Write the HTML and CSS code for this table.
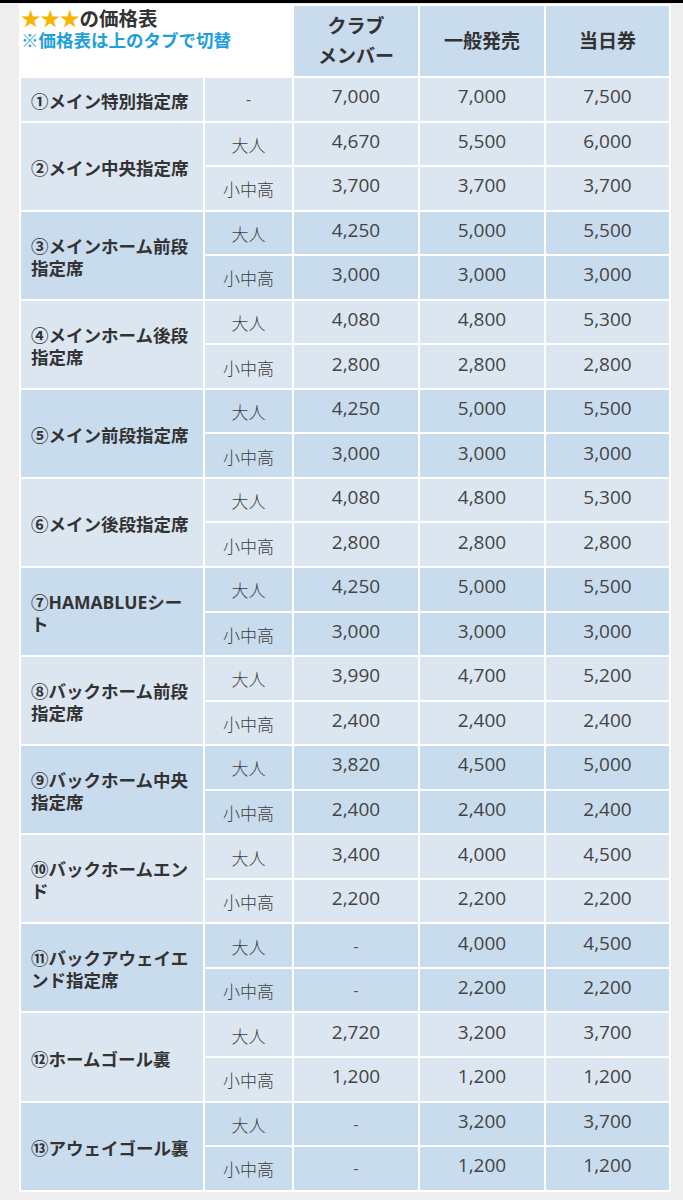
FILE: index.html
```html
<!DOCTYPE html>
<html lang="ja">
<head>
<meta charset="utf-8">
<link rel="stylesheet" href="styles.css">
</head>
<body>
<div class="topbar"></div>
<table class="price">
  <colgroup>
    <col class="c1"><col class="c2"><col class="c3"><col class="c4"><col class="c5">
  </colgroup>
  <thead>
    <tr class="head">
      <th colspan="2" class="title">
        <div class="t1"><span class="stars">★★★</span>の価格表</div>
        <div class="t2">※価格表は上のタブで切替</div>
      </th>
      <th>クラブ<br>メンバー</th>
      <th>一般発売</th>
      <th>当日券</th>
    </tr>
  </thead>
  <tbody>
    <tr class="lt"><th class="seat">①メイン特別指定席</th><td class="dash">-</td><td class="num">7,000</td><td class="num">7,000</td><td class="num">7,500</td></tr>

    <tr class="lt"><th class="seat" rowspan="2">②メイン中央指定席</th><td class="age">大人</td><td class="num">4,670</td><td class="num">5,500</td><td class="num">6,000</td></tr>
    <tr class="lt"><td class="age">小中高</td><td class="num">3,700</td><td class="num">3,700</td><td class="num">3,700</td></tr>

    <tr class="bl"><th class="seat" rowspan="2">③メインホーム前段指定席</th><td class="age">大人</td><td class="num">4,250</td><td class="num">5,000</td><td class="num">5,500</td></tr>
    <tr class="bl"><td class="age">小中高</td><td class="num">3,000</td><td class="num">3,000</td><td class="num">3,000</td></tr>

    <tr class="lt"><th class="seat" rowspan="2">④メインホーム後段指定席</th><td class="age">大人</td><td class="num">4,080</td><td class="num">4,800</td><td class="num">5,300</td></tr>
    <tr class="lt"><td class="age">小中高</td><td class="num">2,800</td><td class="num">2,800</td><td class="num">2,800</td></tr>

    <tr class="bl"><th class="seat" rowspan="2">⑤メイン前段指定席</th><td class="age">大人</td><td class="num">4,250</td><td class="num">5,000</td><td class="num">5,500</td></tr>
    <tr class="bl"><td class="age">小中高</td><td class="num">3,000</td><td class="num">3,000</td><td class="num">3,000</td></tr>

    <tr class="lt"><th class="seat" rowspan="2">⑥メイン後段指定席</th><td class="age">大人</td><td class="num">4,080</td><td class="num">4,800</td><td class="num">5,300</td></tr>
    <tr class="lt"><td class="age">小中高</td><td class="num">2,800</td><td class="num">2,800</td><td class="num">2,800</td></tr>

    <tr class="bl"><th class="seat" rowspan="2">⑦HAMABLUEシート</th><td class="age">大人</td><td class="num">4,250</td><td class="num">5,000</td><td class="num">5,500</td></tr>
    <tr class="bl"><td class="age">小中高</td><td class="num">3,000</td><td class="num">3,000</td><td class="num">3,000</td></tr>

    <tr class="lt"><th class="seat" rowspan="2">⑧バックホーム前段指定席</th><td class="age">大人</td><td class="num">3,990</td><td class="num">4,700</td><td class="num">5,200</td></tr>
    <tr class="lt"><td class="age">小中高</td><td class="num">2,400</td><td class="num">2,400</td><td class="num">2,400</td></tr>

    <tr class="bl"><th class="seat" rowspan="2">⑨バックホーム中央指定席</th><td class="age">大人</td><td class="num">3,820</td><td class="num">4,500</td><td class="num">5,000</td></tr>
    <tr class="bl"><td class="age">小中高</td><td class="num">2,400</td><td class="num">2,400</td><td class="num">2,400</td></tr>

    <tr class="lt"><th class="seat" rowspan="2">⑩バックホームエンド</th><td class="age">大人</td><td class="num">3,400</td><td class="num">4,000</td><td class="num">4,500</td></tr>
    <tr class="lt"><td class="age">小中高</td><td class="num">2,200</td><td class="num">2,200</td><td class="num">2,200</td></tr>

    <tr class="bl"><th class="seat" rowspan="2">⑪バックアウェイエンド指定席</th><td class="age">大人</td><td class="dash">-</td><td class="num">4,000</td><td class="num">4,500</td></tr>
    <tr class="bl"><td class="age">小中高</td><td class="dash">-</td><td class="num">2,200</td><td class="num">2,200</td></tr>

    <tr class="lt"><th class="seat" rowspan="2">⑫ホームゴール裏</th><td class="age">大人</td><td class="num">2,720</td><td class="num">3,200</td><td class="num">3,700</td></tr>
    <tr class="lt"><td class="age">小中高</td><td class="num">1,200</td><td class="num">1,200</td><td class="num">1,200</td></tr>

    <tr class="bl"><th class="seat" rowspan="2">⑬アウェイゴール裏</th><td class="age">大人</td><td class="dash">-</td><td class="num">3,200</td><td class="num">3,700</td></tr>
    <tr class="bl"><td class="age">小中高</td><td class="dash">-</td><td class="num">1,200</td><td class="num">1,200</td></tr>
  </tbody>
</table>
</body>
</html>
```

FILE: styles.css
```css
html, body {
  margin: 0;
  padding: 0;
  background: #eeeeee;
}
body {
  font-family: "Open Sans", "Noto Sans CJK JP", sans-serif;
  color: #444;
}
.topbar {
  height: 3px;
  background: #000;
}
.price {
  margin: 1px 0 0 19px;
  width: 652px;
  table-layout: fixed;
  border-collapse: separate;
  border-spacing: 2px;
  background: #ffffff;
}
.c1 { width: 182px; }
.c2 { width: 87px; }
.c3 { width: 124px; }
.c4 { width: 124px; }
.c5 { width: 123px; }

.price th, .price td {
  padding: 0;
}
.head {
  height: 70px;
}
.head th {
  background: #c9dcee;
  font-family: "Noto Sans CJK JP", sans-serif;
  font-weight: 700;
  font-size: 19px;
  line-height: 30px;
  color: #333;
  text-align: center;
  vertical-align: middle;
  padding-bottom: 2px;
}
.head th.title {
  background: #ffffff;
  text-align: left;
  vertical-align: top;
  padding: 0;
}
.t1 {
  font-size: 19.5px;
  line-height: 24px;
  color: #333;
  font-weight: 700;
}
.stars {
  color: #f7b500;
}
.t2 {
  font-size: 17.5px;
  line-height: 20px;
  color: #1f9fdc;
  font-weight: 700;
}
tbody tr {
  height: 42.56px;
}
tbody tr.lt th, tbody tr.lt td {
  background: #dce6f0;
}
tbody tr.bl th, tbody tr.bl td {
  background: #c9dcee;
}
.seat {
  font-family: "Open Sans", "Noto Sans CJK JP", sans-serif;
  font-weight: 700;
  font-size: 17.5px;
  line-height: 22px;
  color: #333;
  text-align: left;
  vertical-align: middle;
  padding: 3px 8px 0 10px !important;
}
.age {
  font-family: "Noto Sans CJK JP", sans-serif;
  font-weight: 300;
  font-size: 17px;
  color: #3d3d3d;
  text-align: center;
  padding-top: 1px !important;
}
.num {
  font-size: 19px;
  text-align: center;
  color: #444;
  padding-bottom: 6px !important;
}
.dash {
  font-size: 16px;
  text-align: center;
  color: #555;
}
```
